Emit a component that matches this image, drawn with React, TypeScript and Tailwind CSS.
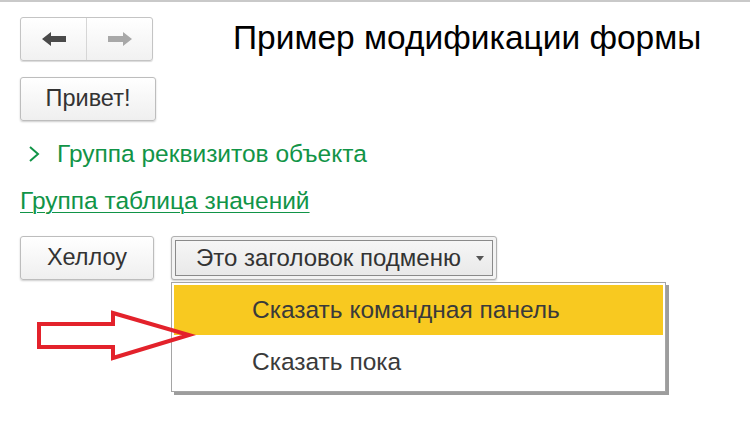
import React from 'react'

const font = { fontFamily: '"Liberation Sans", Arial, sans-serif' }

function NavArrow({ dir, color }: { dir: 'left' | 'right'; color: string }) {
  // стрелка "назад/вперёд" в стиле 1С
  const d = dir === 'left'
    ? 'M1 8 L10 1 L10 5 L25 5 L25 11 L10 11 L10 15 Z'
    : 'M25 8 L16 1 L16 5 L1 5 L1 11 L16 11 L16 15 Z'
  return (
    <svg width="26" height="16" viewBox="0 0 26 16">
      <path d={d} fill={color} />
    </svg>
  )
}

export default function App() {
  return (
    <div className="relative w-[750px] h-[434px] overflow-hidden bg-white text-[#333]" style={font}>
      {/* верхняя граница окна */}
      <div className="h-[3px] border-t-2 border-[#c9c9c9] bg-white" />

      <div className="px-5">
        {/* шапка: навигация + заголовок */}
        <div className="flex items-center mt-[14px]">
          <div className="flex h-[44px] w-[133px] rounded-[3px] border border-[#c4c4c4] bg-gradient-to-b from-white to-[#f1f1f1] shadow-[0_1px_1px_rgba(0,0,0,0.15)]">
            <div className="flex-1 flex items-center justify-center border-r border-[#d6d6d6]">
              <NavArrow dir="left" color="#4a4a4a" />
            </div>
            <div className="flex-1 flex items-center justify-center">
              <NavArrow dir="right" color="#a8a8a8" />
            </div>
          </div>
          <h1 className="ml-[80px] text-[33.5px] leading-none text-black -mt-[3px]">Пример модификации формы</h1>
        </div>

        {/* кнопка Привет! */}
        <button className="mt-[16px] h-[44px] w-[136px] rounded-[3px] border border-[#bdbdbd] bg-gradient-to-b from-white to-[#efefef] shadow-[0_1px_2px_rgba(0,0,0,0.2)] text-[23.5px] text-[#333]">
          Привет!
        </button>

        {/* свёрнутая группа */}
        <div className="mt-[21px] flex items-center gap-[17px] pl-[8px] text-[#119447]">
          <svg width="12" height="18" viewBox="0 0 12 18">
            <path d="M2 2 L10 9 L2 16" fill="none" stroke="#119447" strokeWidth="2" />
          </svg>
          <span className="text-[24.5px] leading-6">Группа реквизитов объекта</span>
        </div>

        {/* ссылка-группа */}
        <div className="mt-[23px]">
          <span className="text-[24.5px] leading-6 text-[#119447] underline underline-offset-[3px] decoration-1">Группа таблица значений</span>
        </div>

        {/* нижние кнопки */}
        <div className="mt-[20px] flex items-center gap-[17px]">
          <button className="h-[44px] w-[134px] rounded-[3px] border border-[#bdbdbd] bg-gradient-to-b from-white to-[#efefef] shadow-[0_1px_2px_rgba(0,0,0,0.2)] text-[23.5px] text-[#333]">
            Хеллоу
          </button>
          <div className="h-[44px] w-[326px] rounded-[3px] border border-[#b0b0b0] bg-[#f3f3f3] p-[3px] shadow-[0_1px_2px_rgba(0,0,0,0.2)]">
            <div className="h-full flex items-center border border-[#8a8a8a] bg-gradient-to-b from-[#f6f6f6] to-[#e9e9e9] pl-[20px] text-[24px] text-[#333]">
              <span>Это заголовок подменю</span>
              <svg className="ml-[15px]" width="8" height="5" viewBox="0 0 8 5">
                <path d="M0 0 L8 0 L4 5 Z" fill="#555" />
              </svg>
            </div>
          </div>
        </div>
      </div>

      {/* выпадающее подменю */}
      <div className="absolute left-[171px] top-[282px] w-[495px] border border-[#a5a5a5] bg-white p-[2px] shadow-[3px_3px_0_#9d9d9d]">
        <div className="h-[50px] flex items-center bg-[#f8c920] pl-[78px] text-[24.5px] text-[#3a3a3a]">
          Сказать командная панель
        </div>
        <div className="h-[54px] flex items-center pl-[78px] text-[24.5px] text-[#3a3a3a]">
          Сказать пока
        </div>
      </div>

      {/* красная стрелка-указатель */}
      <svg className="absolute left-0 top-0" width="750" height="434" viewBox="0 0 750 434">
        <path
          d="M39 324 L113 324 L113 313 L189 335 L113 358 L113 347 L39 347 Z"
          fill="none"
          stroke="#e3222b"
          strokeWidth="4"
          strokeLinejoin="miter"
        />
      </svg>
    </div>
  )
}
